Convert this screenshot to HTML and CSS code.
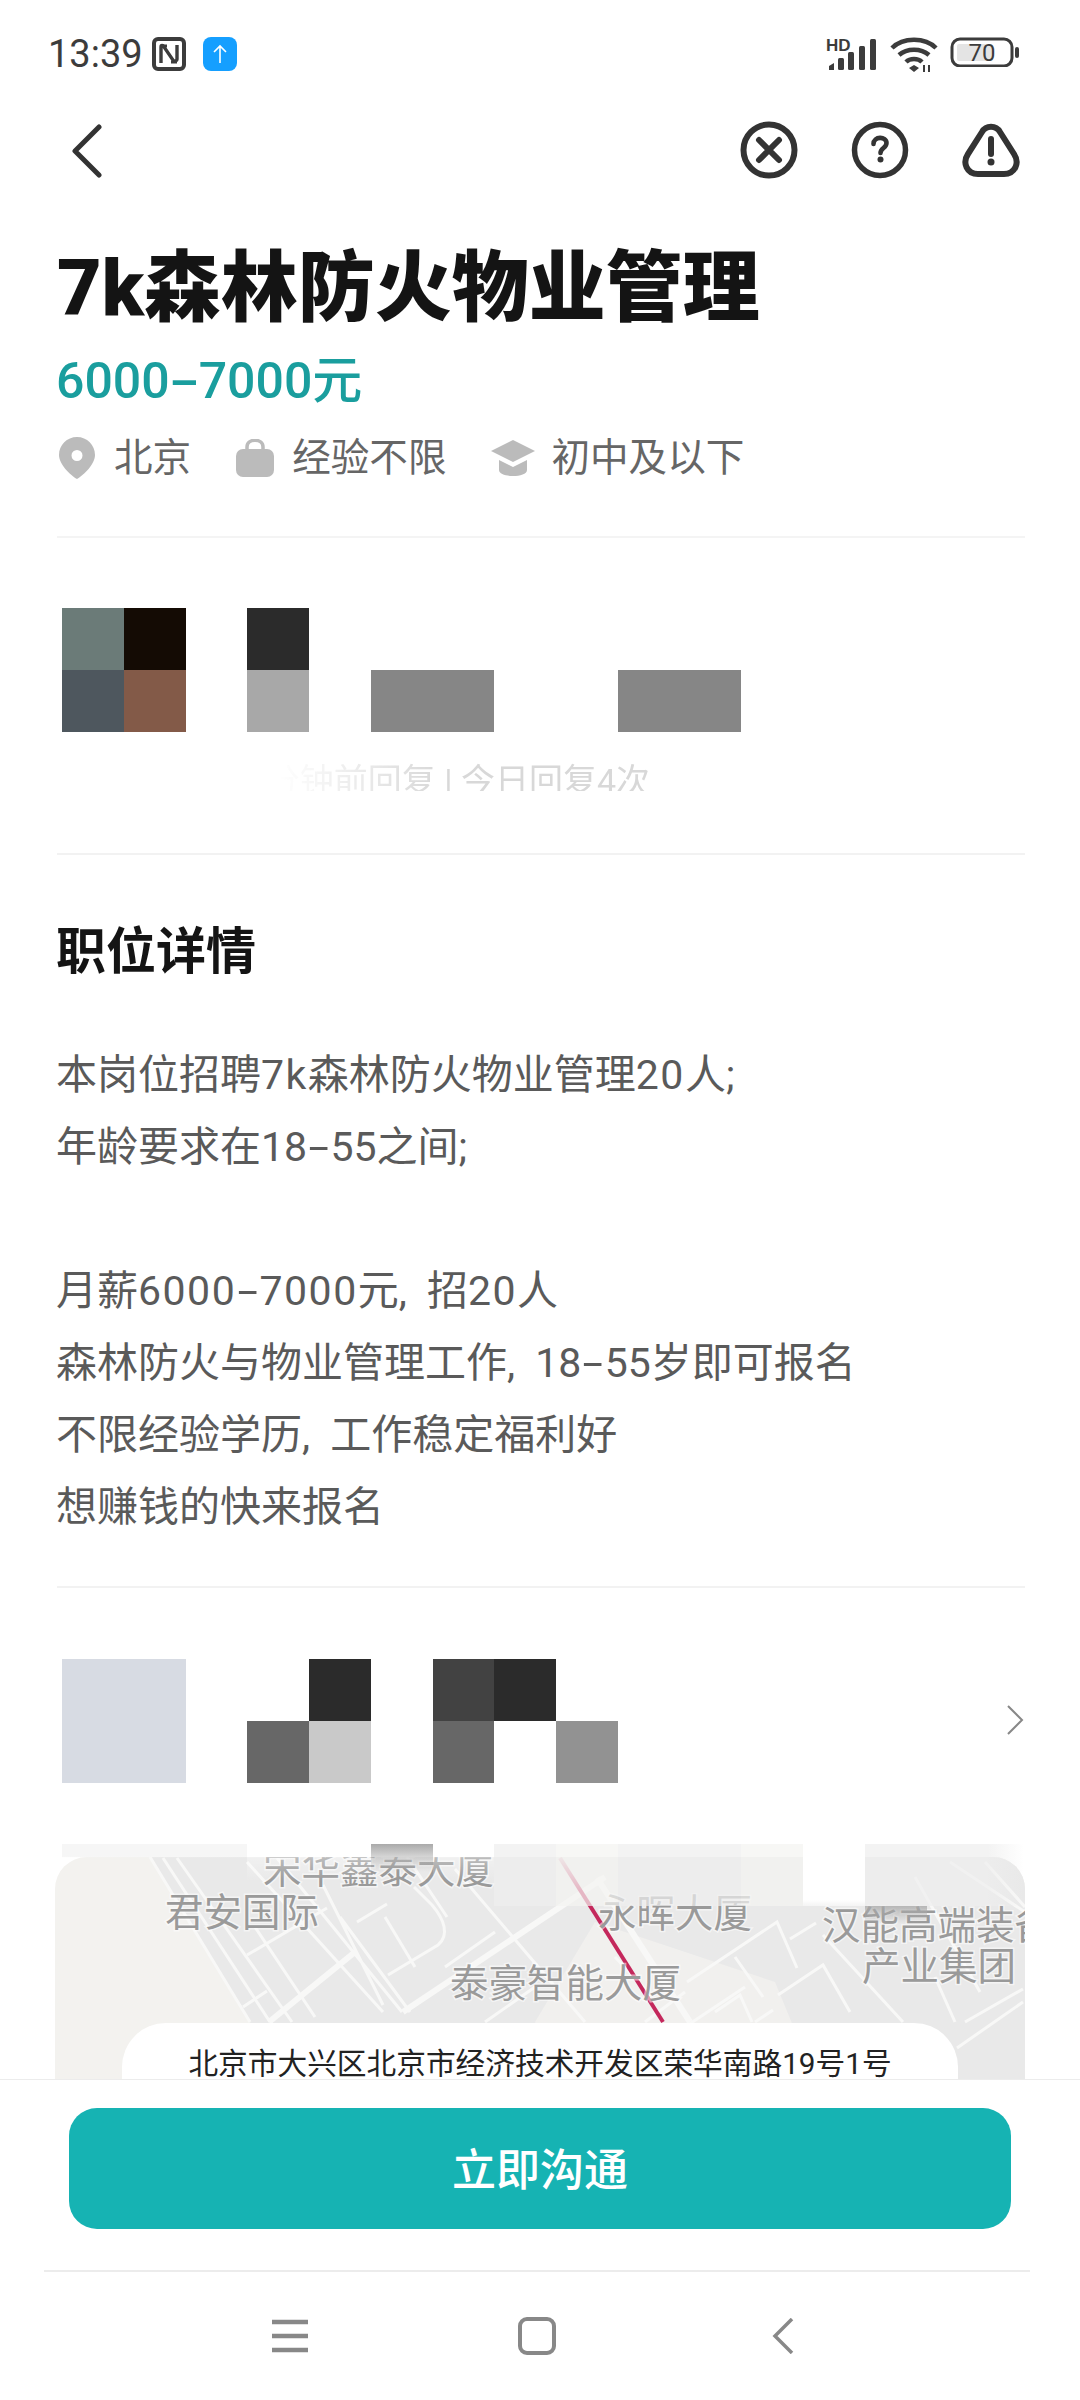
FILE: index.html
```html
<!DOCTYPE html>
<html lang="zh-CN">
<head>
  <meta charset="UTF-8" />
  <title>7k森林防火物业管理</title>
  <meta name="viewport" content="width=device-width, initial-scale=1.0" />
  <link rel="stylesheet" href="styles.css">
</head>
<body>
  <div class="page">
    <main class="content">
      <div class="statusbar">
        <div class="status-left">
          <span class="clock">13:39</span>
          <svg class="nfc" viewBox="0 0 34 34" width="34" height="34">
            <rect x="2" y="2" width="30" height="30" rx="4" fill="none" stroke="#3c3c3c" stroke-width="4"/>
            <path d="M9 26V10c0-2 2-2 3 0l9 13c1 2 4 1 4-1V8" fill="none" stroke="#3c3c3c" stroke-width="3.4"/>
            <path d="M9 9h6M19 25h6" fill="none" stroke="#3c3c3c" stroke-width="3"/>
          </svg>
          <svg class="upload" viewBox="0 0 34 34" width="34" height="34">
            <rect width="34" height="34" rx="8" fill="#159fff"/>
            <path d="M17 26V9M11 15l6-6 6 6" fill="none" stroke="#fff" stroke-width="1.6"/>
          </svg>
        </div>
        <div class="status-right">
          <svg viewBox="0 0 52 34" width="52" height="34">
            <text x="0" y="14" class="hd">HD</text>
            <g fill="#3c3c3c">
              <path d="M3 33v-4l5-3v7z"/>
              <rect x="12" y="21" width="6" height="12" rx="1.5"/>
              <rect x="22" y="15" width="6" height="18" rx="1.5"/>
              <rect x="33" y="9" width="6" height="24" rx="1.5"/>
              <rect x="44" y="2" width="6" height="31" rx="1.5"/>
            </g>
          </svg>
          <svg viewBox="0 0 48 36" width="48" height="36">
            <g fill="none" stroke="#3c3c3c" stroke-width="4.5">
              <path d="M2 11C13 0 35 0 46 11"/>
              <path d="M9 18c8-7 22-7 30 0"/>
              <path d="M16 25c4-4 12-4 16 0"/>
            </g>
            <path d="M19 31l5-3 5 3-5 4zM33 28h2v7h-2zM38 28h2v7h-2z" fill="#3c3c3c"/>
          </svg>
          <svg viewBox="0 0 70 30" width="70" height="30">
            <rect x="2" y="2" width="60" height="27" rx="8" fill="none" stroke="#3c3c3c" stroke-width="3"/>
            <rect x="7" y="7" width="36" height="17" rx="2" fill="#e4e4e4"/>
            <rect x="65" y="10" width="4" height="11" rx="2" fill="#3c3c3c"/>
            <text x="32" y="24" text-anchor="middle" class="batt">70</text>
          </svg>
        </div>
      </div>

      <div class="navbar">
        <svg class="back" viewBox="0 0 30 54" width="30" height="54">
          <path d="M27 3L3 27l24 24" fill="none" stroke="#333" stroke-width="5" stroke-linecap="round" stroke-linejoin="round"/>
        </svg>
        <div class="nav-actions">
          <svg viewBox="0 0 58 58" width="58" height="58">
            <circle cx="29" cy="29" r="25.5" fill="none" stroke="#333" stroke-width="6"/>
            <path d="M19 19l20 20M39 19L19 39" stroke="#333" stroke-width="6" stroke-linecap="round"/>
          </svg>
          <svg viewBox="0 0 58 58" width="58" height="58">
            <circle cx="29" cy="29" r="25.5" fill="none" stroke="#333" stroke-width="5.5"/>
            <path d="M22.500 23c0-8 13-8 13-1 0 5-6 5-6 10" fill="none" stroke="#333" stroke-width="4.6" stroke-linecap="round"/>
            <circle cx="29.500" cy="38.500" r="3" fill="#333"/>
          </svg>
          <svg viewBox="0 0 58 54" width="58" height="54">
            <path d="M20 9c4-7 14-7 18 0l14 22c6 9 1 20-10 20H16C5 51 0 40 6 31z" fill="none" stroke="#333" stroke-width="6" stroke-linejoin="round"/>
            <path d="M29 16v15" stroke="#333" stroke-width="6" stroke-linecap="round"/>
            <circle cx="29" cy="39" r="3.500" fill="#333"/>
          </svg>
        </div>
      </div>

      <section class="job-head">
        <h1 class="job-title">7k森林防火物业管理</h1>
        <div class="salary">6000<span class="dash">-</span>7000元</div>
        <div class="meta">
          <div class="meta-item">
            <svg class="icon-pin" viewBox="0 0 36 42" width="36" height="42">
              <path fill-rule="evenodd" d="M18 0c10 0 18 8 18 18 0 9-11 20-18 24C11 38 0 27 0 18 0 8 8 0 18 0zm0 13a5.500 5.500 0 100 11 5.500 5.500 0 000-11z" fill="#bbb"/>
            </svg>
            <span>北京</span>
          </div>
          <div class="meta-item">
            <svg viewBox="0 0 38 38" width="38" height="38">
              <path d="M11 12V8c0-9 16-9 16 0v4" fill="none" stroke="#bbb" stroke-width="3.500"/>
              <rect y="10" width="38" height="28" rx="7" fill="#bbb"/>
            </svg>
            <span>经验不限</span>
          </div>
          <div class="meta-item">
            <svg class="icon-cap" viewBox="0 0 44 36" width="44" height="36">
              <path d="M22 0l22 11-22 11L0 11z" fill="#bbb"/>
              <path d="M8 20l14 7 14-7v10c0 8-28 8-28 0z" fill="#bbb"/>
            </svg>
            <span>初中及以下</span>
          </div>
        </div>
      </section>

      <section class="recruiter">
        <div class="mosaic mosaic-wide">
          <i class="c-sage"></i><i class="c-black"></i><i></i><i class="c-dark"></i><i></i><i></i><i></i><i></i><i></i><i></i><i></i>
          <i class="c-slate"></i><i class="c-brown"></i><i></i><i class="c-silver"></i><i></i><i class="c-mid"></i><i class="c-mid"></i><i></i><i></i><i class="c-mid"></i><i class="c-mid"></i>
        </div>
        <div class="reply-line"><span class="reply-text">10分钟前回复 | 今日回复4次</span></div>
      </section>

      <section class="detail">
        <h2 class="detail-title">职位详情</h2>
        <div class="detail-body">
          <p>本岗位招聘<span class="num">7k</span>森林防火物业管理<span class="num">20</span>人;</p>
          <p>年龄要求在18<span class="dash">-</span>55之间;</p>
          <p class="blank"></p>
          <p>月薪<span class="num">6000</span><span class="dash">-</span><span class="num">7000</span>元, 招<span class="num">20</span>人</p>
          <p>森林防火与物业管理工作, 18<span class="dash">-</span>55岁即可报名</p>
          <p>不限经验学历, 工作稳定福利好</p>
          <p>想赚钱的快来报名</p>
        </div>
      </section>

      <section class="company">
        <div class="company-row">
          <div class="mosaic mosaic-short">
            <i class="c-mist"></i><i class="c-mist"></i><i></i><i></i><i class="c-dark"></i><i></i><i class="c-char"></i><i class="c-dark"></i><i></i>
            <i class="c-mist"></i><i class="c-mist"></i><i></i><i class="c-gray"></i><i class="c-pale"></i><i></i><i class="c-gray"></i><i></i><i class="c-steel"></i>
          </div>
          <svg class="more" viewBox="0 0 18 30" width="18" height="30">
            <path d="M2 1l14 14L2 29" fill="none" stroke="#888" stroke-width="2"/>
          </svg>
        </div>

        <div class="map">
          <svg class="map-art" viewBox="0 0 970 222" width="970" height="222">
            <defs>
              <linearGradient id="railFade" x1="0" y1="0" x2="0" y2="1">
                <stop offset="0" stop-color="#c4285c" stop-opacity="0.2"/>
                <stop offset="0.2" stop-color="#c4285c"/>
              </linearGradient>
            </defs>
            <rect width="970" height="222" fill="#f3f2ef"/>
            <path d="M95 0L195 165l35 57h740V0z" fill="#e9e9e9"/>
            <path d="M480 165l60-100 180 60 40 97H520z" fill="#f1f0ee"/>
            <g fill="none" stroke="#f8f8f7" stroke-width="3">
              <path d="M95 0l100 165M108 1l107 164M122 1l115 164"/>
              <path d="M192 5l136 150M222 1l125 154M268 28l60 120M285 60l70 95"/>
              <path d="M192 98l80-47M188 150l24-16M200 70l60 90"/>
              <path d="M333 118l50-30c12-10 6-26-6-40l-18-18"/>
              <path d="M302 65l30-18M352 0l40 60M400 12l130 153"/>
              <path d="M632 125l90-60 20 46M560 100l34 36M723 138l45-30 27 47"/>
              <path d="M768 78l80 87M735 82l26-16M860 20l65 115M902 191l66-46M910 165l58-33"/>
              <path d="M895 5l75 50M930 5l40 45M630 170l60-40M880 120l20 45"/>
              <path d="M590 165l40-30M660 155l25-17 12 27M700 165l18-12M680 100l28 40"/>
              <path d="M330 60l30 50M390 110l50-35M430 165l50-35"/>
            </g>
            <g fill="none" stroke="#f8f8f7" stroke-width="6">
              <path d="M348 155L550 20M542 21l93 144M214 165L300 95"/>
            </g>
            <path d="M505 1l103 164" fill="none" stroke="url(#railFade)" stroke-width="4"/>
            <g class="map-labels">
              <text x="208" y="26">宋华鑫泰大厦</text>
              <text x="110" y="69">君安国际</text>
              <text x="543" y="70">永晖大厦</text>
              <text x="767" y="82">汉能高端装备</text>
              <text x="807" y="123">产业集团</text>
              <text x="395" y="140">泰豪智能大厦</text>
            </g>
          </svg>
          <div class="map-wash">
            <i class="w-soft"></i><i class="w-soft"></i><i class="w-soft"></i><i class="w-top"></i><i class="w-top"></i><i class="w-dark"></i><i class="w-top"></i><i class="w-gray"></i><i class="w-warm"></i><i class="w-gray"></i><i class="w-gray"></i><i class="w-warm"></i><i class="w-white"></i><i class="w-gray"></i><i class="w-gray"></i><i class="w-gray w-end"></i>
            <i class="w-spot"></i>
          </div>
          <div class="address">北京市大兴区北京市经济技术开发区荣华南路19号1号</div>
        </div>
      </section>
    </main>

    <footer class="footer">
      <div class="action">
        <button class="chat-btn" type="button">立即沟通</button>
      </div>
      <div class="sysnav">
        <svg viewBox="0 0 36 34" width="36" height="34">
          <path d="M0 3h36M0 17h36M0 31h36" stroke="#888" stroke-width="4.500"/>
        </svg>
        <svg viewBox="0 0 38 38" width="38" height="38">
          <rect x="2" y="2" width="34" height="34" rx="7" fill="none" stroke="#888" stroke-width="4"/>
        </svg>
        <svg class="sysback" viewBox="0 0 22 36" width="22" height="36">
          <path d="M20 1L3 18l17 17" fill="none" stroke="#888" stroke-width="3.500"/>
        </svg>
      </div>
    </footer>
  </div>
</body>
</html>
```

FILE: styles.css
```css
* {
  box-sizing: border-box;
}
body {
  margin: 0;
  background-color: #fff;
  font-family: Roboto, 'Noto Sans CJK SC', sans-serif;
  color: #333;
}
p, h1, h2 {
  margin: 0;
}
svg {
  display: block;
  flex: none;
}
.page {
  width: 1080px;
  height: 2400px;
  display: flex;
  flex-direction: column;
  overflow: hidden;
}
.content {
  height: 2079px;
  overflow: hidden;
}

/* status bar */
.statusbar {
  height: 110px;
  padding: 37px 60px 0 48px;
  display: flex;
  justify-content: space-between;
  align-items: flex-start;
}
.status-left {
  display: flex;
  align-items: center;
}
.clock {
  font-size: 38px;
  line-height: 34px;
  color: #3c3c3c;
  width: 104px;
}
.upload {
  margin-left: 17px;
}
.status-right {
  display: flex;
  align-items: flex-start;
  gap: 12px;
}
.hd {
  font: 700 17px 'Liberation Sans', sans-serif;
  fill: #3c3c3c;
}
.batt {
  font: 400 24px Roboto, sans-serif;
  fill: #3c3c3c;
}

/* nav */
.navbar {
  height: 72px;
  padding: 11px 60px 0 72px;
  display: flex;
  justify-content: space-between;
  align-items: flex-start;
}
.back {
  margin-top: 3px;
}
.nav-actions {
  display: flex;
  gap: 53px;
  align-items: flex-start;
}
.nav-actions svg:last-child {
  margin-top: 2px;
}

/* job head */
.job-head {
  margin: 0 55px 0 57px;
  height: 356px;
  border-bottom: 2px solid #f4f4f4;
}
.job-title {
  font-size: 77px;
  font-weight: 900;
  line-height: 100px;
  color: #141414;
  padding-top: 57px;
  height: 157px;
}
.salary {
  font-size: 50px;
  font-weight: 500;
  line-height: 60px;
  margin-top: 12px;
  margin-left: -1px;
  color: #1a9e9e;
}
.dash {
  display: inline-block;
  transform: scaleX(1.8);
  margin: 0 6px;
}
.meta {
  display: flex;
  gap: 45px;
  margin-top: 23px;
  margin-left: 2px;
}
.meta-item {
  display: flex;
  align-items: center;
  gap: 18px;
  font-size: 38.6px;
  line-height: 48px;
  color: #666;
}
.icon-pin {
  margin-right: 1px;
}
.icon-cap {
  margin-right: -2px;
}

/* mosaic blocks stand in for the pixelated bits of the shot */
.mosaic {
  display: grid;
  grid-auto-rows: 62px;
}
.mosaic-wide {
  grid-template-columns: repeat(11, 61.75px);
}
.mosaic-short {
  grid-template-columns: repeat(9, 61.75px);
  flex: 1;
}
.c-sage { background: #6b7b78; }
.c-black { background: #140b04; }
.c-dark { background: #2b2b2b; }
.c-slate { background: #4e575e; }
.c-brown { background: #835a48; }
.c-silver { background: #a8a8a8; }
.c-mid { background: #868686; }
.c-mist { background: #d7dbe3; }
.c-char { background: #424242; }
.c-gray { background: #676767; }
.c-pale { background: #c9c9c9; }
.c-steel { background: #929292; }

.recruiter {
  margin: 0 55px 0 57px;
  height: 317px;
  padding: 70px 0 0 5px;
  border-bottom: 2px solid #f2f2f2;
}
.reply-line {
  height: 28px;
  margin-top: 31px;
  overflow: hidden;
  text-align: right;
  width: 588px;
  white-space: nowrap;
}
.reply-text {
  display: inline-block;
  font-size: 34px;
  line-height: 36px;
  color: #d8d8d8;
  -webkit-mask-image: linear-gradient(90deg, transparent 12%, #000 50%);
  mask-image: linear-gradient(90deg, transparent 12%, #000 50%);
}

/* detail */
.detail {
  margin: 0 55px 0 57px;
  height: 733px;
  border-bottom: 2px solid #f2f2f2;
}
.detail-title {
  font-size: 50px;
  font-weight: 700;
  line-height: 70px;
  color: #141414;
  padding-top: 62px;
  margin-left: -1px;
  height: 132px;
}
.detail-body {
  margin-top: 52px;
  margin-left: -1px;
  font-size: 41px;
  line-height: 72px;
  word-spacing: 10px;
  color: #5a5a5a;
}
.num {
  letter-spacing: 1.5px;
}
.blank {
  height: 72px;
}

/* company + map */
.company {
  padding-top: 71px;
}
.company-row {
  display: flex;
  align-items: center;
  padding: 0 56px 0 62px;
  height: 123px;
}
.more {
  margin-top: -2px;
}
.map {
  position: relative;
  margin: 75px 55px 0 55px;
  height: 300px;
}
.map-art {
  border-radius: 32px 32px 0 0;
}
.map-labels {
  font: 400 38.5px 'Noto Sans CJK SC', sans-serif;
  fill: #9a9a9a;
  stroke: #fff;
  stroke-opacity: 0.55;
  stroke-width: 3px;
  paint-order: stroke;
}
.map-wash {
  position: absolute;
  top: -13px;
  left: 7px;
  right: 0;
  display: grid;
  grid-template-columns: repeat(16, 61.75px);
  grid-template-rows: 62px 18px;
}
.w-soft { background: linear-gradient(#f6f6f6 20%, rgba(246,246,246,0) 22%); }
.w-top { background: linear-gradient(#fff 20%, rgba(255,255,255,0.35) 22%, rgba(255,255,255,0) 60%); }
.w-white { background: linear-gradient(#fff 90%, rgba(255,255,255,0.5)); }
.w-dark { background: linear-gradient(#aaa, rgba(190,190,190,0.6) 22%, rgba(233,233,233,0) 45%); }
.w-gray { background: rgba(238,238,238,0.7); }
.w-warm { background: rgba(244,243,241,0.7); }
.w-end { background: linear-gradient(90deg, rgba(238,238,238,0.7), rgba(255,255,255,0)); width: 36px; }
.w-spot {
  grid-column: 14;
  grid-row: 2;
  background: linear-gradient(rgba(170,170,170,0.8), rgba(170,170,170,0));
}
.address {
  position: absolute;
  left: 67px;
  top: 166px;
  width: 836px;
  height: 120px;
  background: #fff;
  border-radius: 44px 44px 0 0;
  font-size: 29.7px;
  line-height: 40px;
  padding-top: 21px;
  text-align: center;
  color: #222;
}

/* footer */
.footer {
  flex: 1;
  background: #fff;
  border-top: 1px solid #ececec;
  position: relative;
}
.action {
  padding: 28px 19px 41px 25px;
  margin: 0 50px 0 44px;
  border-bottom: 2px solid #ececec;
}
.chat-btn {
  display: block;
  width: 100%;
  height: 121px;
  padding-bottom: 4px;
  border: none;
  border-radius: 28px;
  background-color: #16b3b3;
  color: #fff;
  font: 500 44px 'Noto Sans CJK SC', sans-serif;
}
.sysnav {
  display: flex;
  align-items: center;
  padding: 45px 0 0 272px;
  gap: 210px;
}
.sysback {
  margin-left: 6px;
}
```
